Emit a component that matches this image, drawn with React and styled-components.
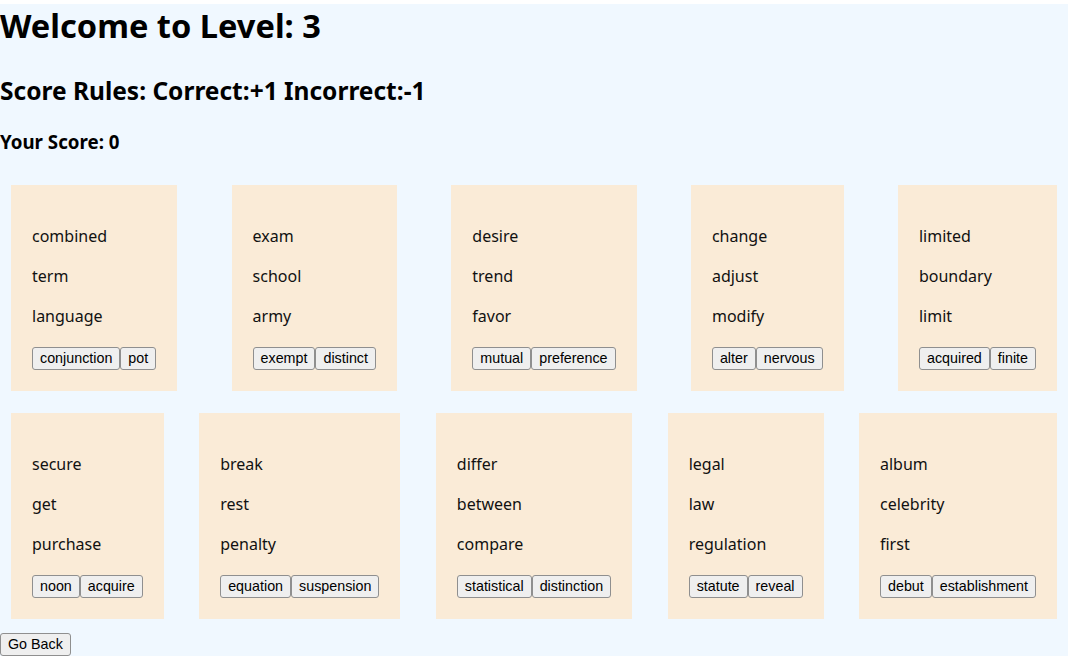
import React, { useState } from 'react';
import styled, { createGlobalStyle } from 'styled-components';

const GlobalStyle = createGlobalStyle`
  html, body {
    margin: 0;
    padding: 0;
    background: #ffffff;
  }
  body {
    padding-top: 4px;
    font-family: "Noto Sans", "Open Sans", sans-serif;
    color: #000;
  }
`;

const Main = styled.main`
  display: flow-root;
  background-color: #f0f8ff;
`;

const Title = styled.h1`
  margin: 0;
  font-size: 32.6px;
  line-height: 44px;
  font-weight: 700;
`;

const Rules = styled.h2`
  margin: 27px 0 0;
  font-size: 24.5px;
  line-height: 32px;
  font-weight: 700;
`;

const Score = styled.h3`
  margin: 22px 0 20px;
  font-size: 18.72px;
  line-height: 25px;
  font-weight: 700;
`;

const CardGrid = styled.div`
  display: flex;
  flex-wrap: wrap;
  justify-content: space-between;
`;

const Card = styled.div`
  margin: 11px;
  padding: 39px 21px 21px;
  background-color: #faebd7;
  display: flex;
  flex-direction: column;
  align-items: flex-start;
`;

const Word = styled.p`
  margin: 0 0 16px;
  font-size: 16px;
  line-height: 24px;
  color: #111;
`;

const Choices = styled.div`
  display: flex;
  margin-top: 3px;
`;

const Button = styled.button`
  font-family: "Liberation Sans", Arial, sans-serif;
  font-size: 14.3px;
  line-height: 17px;
  padding: 2px 7px;
  color: #000;
  background-color: #efefef;
  border: 1px solid #8f8f8f;
  border-radius: 3px;
  cursor: pointer;

  &:hover {
    background-color: #e5e5e5;
  }
`;

const BackButton = styled(Button)`
  display: block;
  margin-top: 3px;
`;

const levelData = [
  { words: ['combined', 'term', 'language'], options: ['conjunction', 'pot'] },
  { words: ['exam', 'school', 'army'], options: ['exempt', 'distinct'] },
  { words: ['desire', 'trend', 'favor'], options: ['mutual', 'preference'] },
  { words: ['change', 'adjust', 'modify'], options: ['alter', 'nervous'] },
  { words: ['limited', 'boundary', 'limit'], options: ['acquired', 'finite'] },
  { words: ['secure', 'get', 'purchase'], options: ['noon', 'acquire'] },
  { words: ['break', 'rest', 'penalty'], options: ['equation', 'suspension'] },
  { words: ['differ', 'between', 'compare'], options: ['statistical', 'distinction'] },
  { words: ['legal', 'law', 'regulation'], options: ['statute', 'reveal'] },
  { words: ['album', 'celebrity', 'first'], options: ['debut', 'establishment'] },
];

const answers = ['conjunction', 'exempt', 'preference', 'alter', 'finite', 'acquire', 'suspension', 'distinction', 'statute', 'debut'];

function App() {
  const [score, setScore] = useState(0);

  const pick = (index, option) => {
    setScore((prev) => (answers[index] === option ? prev + 1 : prev - 1));
  };

  return (
    <>
      <GlobalStyle />
      <Main>
        <Title>Welcome to Level: 3</Title>
        <Rules>Score Rules: Correct:+1 Incorrect:-1</Rules>
        <Score>Your Score: {score}</Score>
        <CardGrid>
          {levelData.map((item, i) => (
            <Card key={i}>
              {item.words.map((w) => (
                <Word key={w}>{w}</Word>
              ))}
              <Choices>
                {item.options.map((o) => (
                  <Button key={o} onClick={() => pick(i, o)}>{o}</Button>
                ))}
              </Choices>
            </Card>
          ))}
        </CardGrid>
        <BackButton>Go Back</BackButton>
      </Main>
    </>
  );
}

export default App;
